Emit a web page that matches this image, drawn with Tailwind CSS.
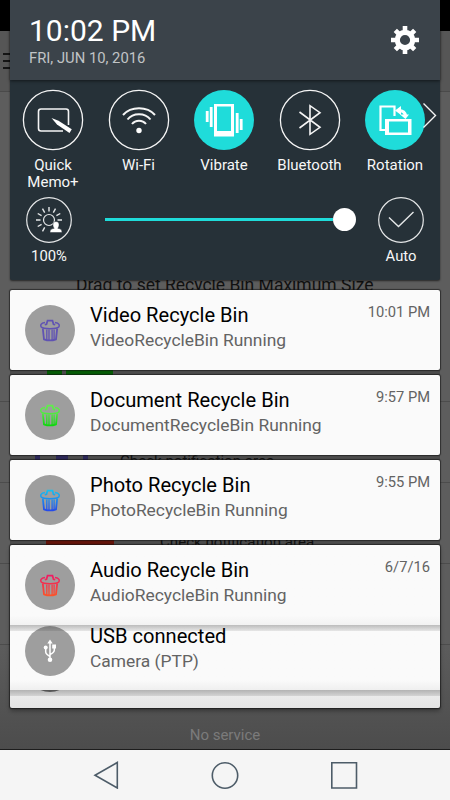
<!DOCTYPE html>
<html lang="en">
<head>
<meta charset="utf-8">
<title>Notifications</title>
<script src="https://cdn.jsdelivr.net/npm/@tailwindcss/browser@4"></script>
</head>
<body class="font-['Roboto',sans-serif]">
<svg width="0" height="0" class="absolute">
  <defs>
    <linearGradient id="gd" gradientUnits="userSpaceOnUse" x1="0" y1="0" x2="0" y2="22"><stop offset="0" stop-color="#62f04c"/><stop offset=".4" stop-color="#55ea44"/><stop offset="1" stop-color="#0bd70c"/></linearGradient>
    <linearGradient id="gp" gradientUnits="userSpaceOnUse" x1="0" y1="0" x2="0" y2="22"><stop offset="0" stop-color="#12c9f2"/><stop offset="1" stop-color="#2548ea"/></linearGradient>
    <linearGradient id="ga" gradientUnits="userSpaceOnUse" x1="0" y1="0" x2="0" y2="22"><stop offset="0" stop-color="#ee1768"/><stop offset="1" stop-color="#fb5429"/></linearGradient>
    <g id="bin" fill="none" stroke-width="1.500">
      <path d="M5 3.500C.5 4.200 .3 6.500 1.300 8 3 10.200 17 10.200 18.700 8 19.700 6.500 19.500 4.200 15 3.500" stroke-width="1.500"/>
      <path d="M4.800 5.800 6.500 5.300 7.500 1.700H12.500L13.500 5.300 15.200 5.800" stroke-width="1.700"/>
      <path d="M2.800 9.500 4 20.300Q10 22.600 16 20.300L17.200 9.500" stroke-width="1.800"/>
      <path d="M6.800 10.500V20.800M9 10.500V21.300M12.100 10.500V21.300M14.100 10.500V20.800" stroke-width="1.300"/>
    </g>
  </defs>
</svg>
<div class="relative w-[450px] h-[800px] overflow-hidden flex flex-col bg-[#5c5c5c]">

  <!-- dimmed app behind the shade -->
  <div class="absolute inset-0 bg-linear-to-b from-[#5d5d5d] from-80% to-[#4c4c4c] to-94%">
    <div class="h-[31px] bg-black"></div>
    <div class="h-[61px] bg-[#565656] border-b border-[#4a4a4a]"></div>
    <svg class="absolute left-0 top-[50px]" width="12" height="20" stroke="#151515" stroke-width="2"><path d="M3 4H12M3 11H12M3 18H12"/></svg>
    <div class="absolute left-0 top-[401px] w-full h-px bg-[#4c4c4c]"></div>
    <div class="absolute left-0 top-[482px] w-full h-px bg-[#4c4c4c]"></div>
    <div class="absolute left-0 top-[563px] w-full h-px bg-[#4c4c4c]"></div>
    <div class="absolute left-0 top-[644px] w-full h-px bg-[#4c4c4c]"></div>
    <div class="absolute left-[76px] top-[273px] text-[17.500px] leading-[24px] whitespace-nowrap text-[#111]">Drag to set Recycle Bin Maximum Size</div>
    <div class="absolute left-[10px] top-[370px] w-[430px] h-[5px] bg-[#4c4c4c]"></div>
    <div class="absolute left-[10px] top-[455px] w-[430px] h-[5px] bg-[#4c4c4c]"></div>
    <div class="absolute left-[10px] top-[540px] w-[430px] h-[5px] bg-[#4c4c4c]"></div>
    <div class="absolute left-[47px] top-[370px] w-[15px] h-[5px] bg-[#065c06]"></div>
    <div class="absolute left-[66px] top-[370px] w-[47px] h-[5px] bg-[#065c06]"></div>
    <div class="absolute left-[35px] top-[455px] w-[5px] h-[5px] bg-[#2c2858]"></div>
    <div class="absolute left-[56px] top-[455px] w-[12px] h-[5px] bg-[#2c2858]"></div>
    <div class="absolute left-[83px] top-[455px] w-[5px] h-[5px] bg-[#2c2858]"></div>
    <div class="absolute left-[46px] top-[540px] w-[68px] h-[5px] bg-[#64140a]"></div>
    <div class="absolute left-[120px] top-[451px] text-[15.100px] leading-[20px] whitespace-nowrap text-[#111]">Check notification area</div>
    <div class="absolute left-[160px] top-[532px] text-[15.100px] leading-[20px] whitespace-nowrap text-[#111]">Check notification area</div>
  </div>

  <!-- quick settings -->
  <section class="relative mx-[10px] h-[280px] shrink-0 rounded-b-[2px] bg-[#263138] shadow-[0_1px_2px_#0009] text-[#f7f7f7]">
    <header class="relative h-[80px] bg-[#3b434a] shadow-[0_1px_3px_#0008] flex justify-between pl-[19px] pr-[20px]">
      <div>
        <div class="mt-[13px] text-[30px] leading-[35px] whitespace-nowrap text-white">10:02 PM</div>
        <div class="mt-px text-[14.800px] leading-[18px] whitespace-nowrap text-[#c1c4c6]">FRI, JUN 10, 2016</div>
      </div>
      <svg class="mt-[25px]" width="30" height="30" viewBox="-15 -15 30 30" fill="none" stroke="#fff">
        <circle r="7.700" stroke-width="5.200"/>
        <g stroke-width="4.600"><path d="M0-14V-9M0 14V9M-14 0H-9M14 0H9"/><path d="M-9.700-9.700-6.500-6.500M9.700 9.700 6.500 6.500M-9.700 9.700-6.500 6.500M9.700-9.700 6.500-6.500"/></g>
      </svg>
    </header>
    <div class="relative h-[115px] flex pt-[9px] text-[15px] leading-[17px] text-center">
      <div class="w-[86px] shrink-0 flex flex-col items-center">
        <svg width="62" height="62" viewBox="-31 -31 62 62" fill="none" stroke="#f5f5f5"><circle r="29.600" stroke-width="1.300"/><path d="M10 11H-12Q-14.500 11-14.500 8.500V-8.500Q-14.500-11-12-11H13Q15.500-11 15.500-8.500V5" stroke-width="1.600"/><path d="M-1.500-2 4 4.500 16.500 13 18.800 9.300 5.500 .8Z" fill="#fff" stroke="none"/></svg>
        <div class="mt-[6px]">Quick<br>Memo+</div>
      </div>
      <div class="w-[85px] shrink-0 flex flex-col items-center">
        <svg width="62" height="62" viewBox="-31 -31 62 62" fill="none" stroke="#f5f5f5"><circle r="29.600" stroke-width="1.300"/><g stroke-width="2"><path d="M-16-5C-8-14 8-14 16-5M-11.500-.5C-6-7.500 6-7.500 11.500-.5M-7 4C-3.500-.5 3.500-.5 7 4"/></g><circle cy="10.500" r="2.700" fill="#fff" stroke="none"/></svg>
        <div class="mt-[6px]">Wi-Fi</div>
      </div>
      <div class="w-[86px] shrink-0 flex flex-col items-center">
        <svg width="62" height="62" viewBox="-31 -31 62 62" fill="none" stroke="#fff"><circle r="30" fill="#1fdcda" stroke="none"/><path d="M-10-16H10V16.500H-10ZM-7-13.500V11H7V-13.500Z" fill="#fff" fill-rule="evenodd" stroke="none"/><path d="M-12.800-13V7M13.200-7V13" stroke-width="2.800"/><path d="M-16.800-9V2M17.200-1V10" stroke-width="2.800"/></svg>
        <div class="mt-[6px]">Vibrate</div>
      </div>
      <div class="w-[85px] shrink-0 flex flex-col items-center">
        <svg width="62" height="62" viewBox="-31 -31 62 62" fill="none" stroke="#f5f5f5"><circle r="29.600" stroke-width="1.300"/><path d="M-10.500-8 10 7.300 0 14.300V-14.300L10-7.300-10.500 8" stroke-width="1.600"/></svg>
        <div class="mt-[6px]">Bluetooth</div>
      </div>
      <div class="w-[86px] shrink-0 flex flex-col items-center">
        <svg width="62" height="62" viewBox="-31 -31 62 62" fill="none" stroke="#fff"><circle r="30" fill="#1fdcda" stroke="none"/><path d="M-10 10H-14.500V-13.500H-.5V-4" stroke-width="2.200"/><path d="M-10-1H16.500V15H-10ZM-6 1.500V12.500H13V1.500Z" fill="#fff" fill-rule="evenodd" stroke="none"/><path d="M3.500-9.500Q10-9.500 10.500-4" stroke-width="3.200"/><path d="M0-9.500 6-14V-5ZM5-5.500H14L10.500-1Z" fill="#fff" stroke="none"/></svg>
        <div class="mt-[6px]">Rotation</div>
      </div>
      <svg class="absolute left-[412px] top-[22px]" width="16" height="28" fill="none" stroke="#f5f5f5" stroke-width="1.400"><path d="M1.500 1.500 13.500 13.500 1.500 25.500"/></svg>
    </div>
    <div class="flex h-[85px] pl-[15px] pr-[15px] text-[14.800px] leading-[18px] text-center">
      <div class="w-[48px] flex flex-col items-center">
        <svg class="mt-px" width="48" height="48" viewBox="-24 -24 48 48" fill="none" stroke="#e5e7e8"><circle r="22.300" stroke-width="1.200"/><circle r="5.500" stroke-width="1.200"/><path d="M0-13V-8.500M-13 0H-8.500M13 0H8.500M-6.500-11.300-4.300-7.400M6.500-11.300 4.300-7.400M-11.300-6.500-7.400-4.300M11.300-6.500 7.400-4.300M-11.300 6.500-7.400 4.300M-6.500 11.300-4.300 7.400" stroke-width="1.400"/><path d="M7 1.500C11 1.500 10.500 6.500 8.800 8.300 12 8.800 13 9.800 13 12.500H1C1 9.800 2 8.800 5.200 8.300 3.500 6.500 3 1.500 7 1.500Z" fill="#fff" stroke="#263138" stroke-width=".5"/></svg>
        <div class="mt-[3px]">100%</div>
      </div>
      <div class="ml-[32px] mt-[13px] w-[251px] h-[23px] flex items-center">
        <div class="w-[228px] h-[3px] bg-[#1fdcda]"></div>
        <div class="size-[23px] rounded-full bg-white"></div>
      </div>
      <div class="ml-auto w-[48px] flex flex-col items-center">
        <svg class="mt-px" width="48" height="48" viewBox="-24 -24 48 48" fill="none" stroke="#e5e7e8"><circle r="22.300" stroke-width="1.200"/><path d="M-12-2.500-2.500 6.500 12.500-8" stroke-width="1.400"/></svg>
        <div class="mt-[3px]">Auto</div>
      </div>
    </div>
  </section>

  <!-- notifications -->
  <main class="relative mx-[10px] mt-[10px] flex flex-col gap-[5px]">
    <article class="h-[80px] rounded-[2px] bg-[#fafafa] shadow-[0_0_1px_1px_#1119] flex pl-[15px] pr-[10px]">
      <div class="mt-[15px] size-[50px] rounded-full bg-[#9e9e9e] flex items-center justify-center"><svg width="20" height="23" viewBox="0 0 20 23" stroke="#6053b3"><use href="#bin"/></svg></div>
      <div class="ml-[15px] mt-[13px] grow"><h2 class="text-[20.100px] leading-[24px] whitespace-nowrap text-black">Video Recycle Bin</h2><p class="mt-px text-[17.400px] leading-[25px] whitespace-nowrap text-[#636363]">VideoRecycleBin Running</p></div>
      <time class="mt-[13px] text-[14.700px] leading-[18px] text-[#636363] whitespace-nowrap">10:01 PM</time>
    </article>
    <article class="h-[80px] rounded-[2px] bg-[#fafafa] shadow-[0_0_1px_1px_#1119] flex pl-[15px] pr-[10px]">
      <div class="mt-[15px] size-[50px] rounded-full bg-[#9e9e9e] flex items-center justify-center"><svg width="20" height="23" viewBox="0 0 20 23" stroke="url(#gd)"><use href="#bin"/></svg></div>
      <div class="ml-[15px] mt-[13px] grow"><h2 class="text-[20.100px] leading-[24px] whitespace-nowrap text-black">Document Recycle Bin</h2><p class="mt-px text-[17.400px] leading-[25px] whitespace-nowrap text-[#636363]">DocumentRecycleBin Running</p></div>
      <time class="mt-[13px] text-[14.700px] leading-[18px] text-[#636363] whitespace-nowrap">9:57 PM</time>
    </article>
    <article class="h-[80px] rounded-[2px] bg-[#fafafa] shadow-[0_0_1px_1px_#1119] flex pl-[15px] pr-[10px]">
      <div class="mt-[15px] size-[50px] rounded-full bg-[#9e9e9e] flex items-center justify-center"><svg width="20" height="23" viewBox="0 0 20 23" stroke="url(#gp)"><use href="#bin"/></svg></div>
      <div class="ml-[15px] mt-[13px] grow"><h2 class="text-[20.100px] leading-[24px] whitespace-nowrap text-black">Photo Recycle Bin</h2><p class="mt-px text-[17.400px] leading-[25px] whitespace-nowrap text-[#636363]">PhotoRecycleBin Running</p></div>
      <time class="mt-[13px] text-[14.700px] leading-[18px] text-[#636363] whitespace-nowrap">9:55 PM</time>
    </article>
    <div class="rounded-[2px] shadow-[0_0_1px_1px_#1119,0_3px_4px_#0005]">
      <article class="h-[80px] rounded-t-[2px] bg-linear-to-b from-[#fafafa] from-88% to-[#f2f2f2] flex pl-[15px] pr-[10px]">
        <div class="mt-[15px] size-[50px] rounded-full bg-[#9e9e9e] flex items-center justify-center"><svg width="20" height="23" viewBox="0 0 20 23" stroke="url(#ga)"><use href="#bin"/></svg></div>
        <div class="ml-[15px] mt-[13px] grow"><h2 class="text-[20.100px] leading-[24px] whitespace-nowrap text-black">Audio Recycle Bin</h2><p class="mt-px text-[17.400px] leading-[25px] whitespace-nowrap text-[#636363]">AudioRecycleBin Running</p></div>
        <time class="mt-[13px] text-[14.700px] leading-[18px] text-[#636363] whitespace-nowrap">6/7/16</time>
      </article>
      <article class="relative h-[65px] overflow-hidden bg-linear-to-b from-[#fafafa] from-85% to-[#efefef] flex pl-[15px] pr-[10px]">
        <div class="mt-px size-[50px] rounded-full bg-[#9e9e9e] flex items-center justify-center">
          <svg width="14" height="24" viewBox="-7 -12 14 24" fill="none" stroke="#fff" stroke-width="1.500"><path d="M0-9V9M-4.300-3V1Q-4.300 3 0 5.500M4.300-4V-1Q4.300 1.500 0 3.500"/><path d="M0-11.500 2.700-7.500H-2.700ZM2.200-6.500H6V-2.600H2.200Z" fill="#fff" stroke="none"/><circle cx="-4.300" cy="-3.500" r="2" fill="#fff" stroke="none"/><circle cy="8.700" r="2.300" fill="#fff" stroke="none"/></svg>
        </div>
        <div class="ml-[15px] -mt-px"><h2 class="text-[20.100px] leading-[24px] whitespace-nowrap text-black">USB connected</h2><p class="mt-px text-[17.400px] leading-[25px] whitespace-nowrap text-[#636363]">Camera (PTP)</p></div>
        <div class="absolute inset-x-0 top-0 h-[6px] bg-linear-to-b from-black/25 to-black/8"></div>
      </article>
      <div class="relative h-[18px] overflow-hidden rounded-b-[2px] bg-linear-to-b from-[#eee] to-[#e5e5e5]">
        <div class="absolute left-[15px] -top-[48px] size-[50px] rounded-full bg-[#6f6f6f]"></div>
        <div class="absolute inset-x-0 top-0 h-[6px] bg-linear-to-b from-black/25 to-black/10"></div>
      </div>
    </div>
  </main>

  <div class="relative mt-[18px] text-center text-[15px] leading-[18px] text-[#7b7b7b]">No service</div>

  <nav class="relative mt-auto h-[51px] shrink-0 border-t border-[#1d1d1d] bg-[#f5f5f5] flex items-center justify-center gap-[91px]">
    <svg class="-ml-px" width="28" height="28" fill="none" stroke="#4d5c68" stroke-width="1.600"><path d="M25.300 1.500V27L3 14.300Z"/></svg>
    <svg width="28" height="28" fill="none" stroke="#4d5c68" stroke-width="1.600"><circle cx="14" cy="14.500" r="12.700"/></svg>
    <svg width="28" height="28" fill="none" stroke="#4d5c68" stroke-width="1.600"><path d="M1.800 1.800H26.500V27H1.800Z"/></svg>
  </nav>
</div>
</body>
</html>
